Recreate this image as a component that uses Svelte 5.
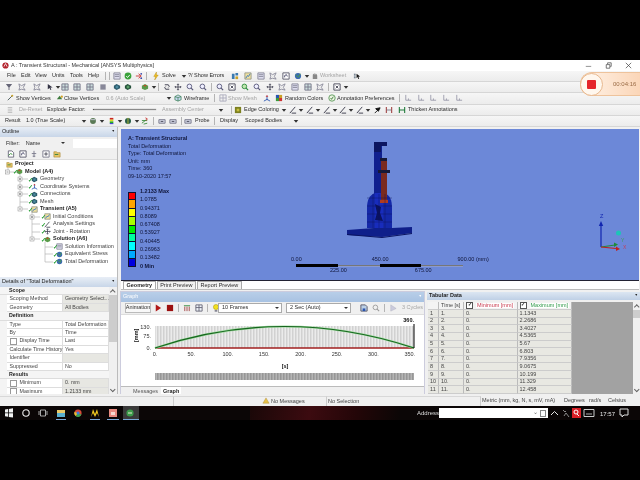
<script>
  // toolbar items are [x, kind, text]; width comes from the next item's x
  const ic = {
    arrow: '<path d="M2 3.5h5L4.5 6.5z" fill="#333"/>',
    page: '<path d="M1.5 1h4l2 2v5h-6z" fill="#fff" stroke="#667"/><path d="M2 6l2-2 2 1" stroke="#2a8a2a" fill="none"/>',
    check: '<circle cx="4.5" cy="4.5" r="3.8" fill="#3aa23a"/><path d="M2.5 4.5l1.5 1.7 2.6-3" stroke="#fff" fill="none"/>',
    flow: '<path d="M1 4.5h5M4 2l3 2.5L4 7" stroke="#c33" fill="none"/><circle cx="7" cy="2" r="1" fill="#34a"/><circle cx="7" cy="7" r="1" fill="#34a"/>',
    bolt: '<path d="M5 0L2 5h2L3 9l4-5.5H5z" fill="#f0c020" stroke="#a87a00" stroke-width=".4"/>',
    pin: '<path d="M1 2h3v6H1zM5 1h3v3H5z" fill="#3a7ab0"/><path d="M5 5h3v3H5z" fill="#c9a227"/>',
    chart: '<path d="M1 1h7v7H1z" fill="#eee0a0" stroke="#998"/><path d="M2 7l2-3 1 1 2-3" stroke="#2a70c0" fill="none"/>',
    doc: '<path d="M1 1h7v7H1z" fill="#dde" stroke="#889"/><path d="M2 3h5M2 5h5" stroke="#889"/>',
    tree: '<path d="M4.5 1v7M2 4h5M3 7h3" stroke="#778"/>',
    box: '<path d="M1 1h7v7H1z" fill="#fff" stroke="#556"/><path d="M3 6V4l2-1 1 2" stroke="#446" fill="none"/>',
    globe: '<circle cx="4.5" cy="4.5" r="3.5" fill="#3c6ab0"/><path d="M2 3l3 3 2-4" stroke="#4aa040" fill="none"/>',
    hand: '<path d="M2 8V3l1-1 1 1V1l1 1v1l1-1 1 2v4z" fill="#888"/>',
    funnel: '<path d="M1 1h7L5 5v3H4V5z" fill="#667"/>',
    star: '<path d="M1 1l3 2 4-2-2 4 2 3-4-1-3 1 1-3z" fill="none" stroke="#889"/>',
    cursor: '<path d="M1 2h2v1H1zM1 4h2v1H1zM1 6h2v1H1z" fill="#567"/><path d="M4 2l4 3-2 .3 1 2.2-1 .4-1-2.2L4 7z" fill="#111"/>',
    mouse: '<path d="M2 1v6l2-1.500 1 2.500 1-.5-1-2.500h2.500z" fill="#334"/>',
    grid: '<path d="M1 1h7v7H1z" fill="#cdd" stroke="#778"/><path d="M4.500 1v7M1 4.500h7" stroke="#778"/>',
    solid: '<path d="M1.500 1.500h6v6h-6z" fill="#889"/>',
    tri: '<path d="M1 3l3-2 4 2v3l-4 2-3-2z" fill="#2c5a6a"/><path d="M3 3h3v3H3z" fill="#4c8aa0"/>',
    tri2: '<path d="M1 3l3-2 4 2v3l-4 2-3-2z" fill="#244f3a"/><path d="M3 3h3v3H3z" fill="#5a9f6a"/>',
    cube: '<path d="M1 3l3.500-2L8 3v3.500L4.500 8 1 6.500z" fill="#5a9a4a"/><path d="M2.500 3l2-1 2 1-2 1z" fill="#c8452a"/>',
    rotate: '<path d="M2 2h4l1 2-1 1M7 7H3L2 5l1-1" stroke="#334" fill="none"/>',
    pan: '<path d="M4.500 1v7M1 4.500h7" stroke="#445"/><path d="M3.500 2l1-1 1 1M3.500 7l1 1 1-1M2 3.500l-1 1 1 1M7 3.500l1 1-1 1" stroke="#445" fill="none"/>',
    zoom: '<circle cx="3.800" cy="3.800" r="2.600" fill="#eef" stroke="#557"/><path d="M5.800 5.800L8 8" stroke="#557" stroke-width="1.300"/>',
    zoomg: '<circle cx="3.800" cy="3.800" r="2.600" fill="#bfe6b0" stroke="#2a8a3a"/><path d="M5.800 5.800L8 8" stroke="#2a8a3a" stroke-width="1.300"/>',
    frame: '<path d="M1 1h7v7H1z" fill="#fff" stroke="#445"/><path d="M3 3l3 3M6 3l-3 3" stroke="#445"/>',
    vert: '<path d="M2 7L7 2" stroke="#455"/><circle cx="7" cy="2" r="1.200" fill="#c9a227"/>',
    close: '<path d="M1 6l3-4 3 4z" fill="#3c7a3c"/><circle cx="6.500" cy="3" r="1.300" fill="#d4a020"/>',
    wire: '<path d="M1 3l3.500-2L8 3v3.500L4.500 8 1 6.500zM4.500 4v4M1 3l3.500 1L8 3" fill="#c7d6ee" stroke="#1f6f3f" stroke-width=".7"/>',
    mesh: '<path d="M1 1h7v7H1zM4.500 1v7M1 4.500h7" fill="none" stroke="#aab"/>',
    vec: '<path d="M4.500 7V2M4.500 6L1 8M4.500 6L8 8" stroke="#2a55b0"/><path d="M4.500 1L3 3h3z" fill="#c33"/>',
    rand: '<path d="M1 1h3.500v3.500H1z" fill="#2a55b0"/><path d="M4.500 1H8v3.500H4.500z" fill="#c9a227"/><path d="M1 4.500h3.500V8H1z" fill="#3a9a3a"/><path d="M4.500 4.500H8V8H4.500z" fill="#c33"/>',
    ann: '<circle cx="4.500" cy="4.500" r="3.600" fill="#eaf3e0" stroke="#5a9a5a"/><path d="M3 4.500l1 1.500 2-3" stroke="#3a7a3a" fill="none"/>',
    lab: '<path d="M2 1v6h6" stroke="#99a" fill="none"/><path d="M5 5v2" stroke="#99a"/>',
    grip: '<path d="M2 2h5M2 4.500h5M2 7h5" stroke="#aaa"/>',
    edge: '<path d="M1 1h7v7H1z" fill="#7c8020"/><path d="M3 3h3v3H3z" fill="#c8c040"/>',
    pen: '<path d="M1 8L7 1M3 8h5" stroke="#334"/>',
    pins: '<path d="M2 8l3-3M3 3l3 3 2-4z" fill="#111" stroke="#111"/>',
    thickr: '<path d="M1.500 1v7M7.500 1v7" stroke="#a04040" stroke-width="1.200"/><path d="M2 4.500h5" stroke="#778"/>',
    thickg: '<path d="M1.500 1v7M7.500 1v7M2 4.500h5" stroke="#1f7a3a" stroke-width="1.200"/>',
    contour: '<circle cx="4.500" cy="4.500" r="3.300" fill="#5a7a55"/><path d="M2 3h5" stroke="#ccd"/>',
    bars: '<path d="M2 1h4v2H2z" fill="#c22"/><path d="M2 3h4v2H2z" fill="#dd2"/><path d="M2 5h4v2H2z" fill="#2a2"/><path d="M2 7h4v1H2z" fill="#22c"/>',
    globe2: '<circle cx="4.500" cy="4.500" r="3.400" fill="#2a5f4a"/><path d="M4.500 1v7" stroke="#bb3"/>',
    vecs: '<path d="M1 7l5-4M1 4h6M3 8l4-1" stroke="#3a8a3a"/><path d="M5 1l2 1-1 2" stroke="#c33" fill="none"/>',
    probe: '<path d="M1 3h7v4H1z" fill="#d4d8e6" stroke="#778"/><path d="M3 5h3" stroke="#445"/>',
    folder: '<path d="M1 2h3l1 1h3v5H1z" fill="#e6c668" stroke="#a07a20" stroke-width=".6"/><path d="M2 5h4" stroke="#2a7a3a"/>',
    plus: '<path d="M1 1h7v7H1z" fill="#fff" stroke="#778"/><path d="M4.500 2.500v4M2.500 4.500h4" stroke="#445"/>',
    play: '<path d="M2 0.500l6 4-6 4z" fill="#b01818"/>',
    stop: '<path d="M1 1h7v7H1z" fill="#9c1010"/>',
    colg: '<path d="M1 1.500h7v1H1z" fill="#2a8a3a"/><path d="M2 3v5M4.500 3v5M7 3v5" stroke="#a04040"/>',
    colb: '<path d="M1 1h7v7H1z" fill="#ecf0f6" stroke="#667"/><path d="M4.500 1v7M1 4h7" stroke="#667"/>',
    bulb: '<circle cx="4.500" cy="3.400" r="2.900" fill="#f2e020" stroke="#a08a00" stroke-width=".5"/><path d="M3 7h3v1.500H3z" fill="#667"/>',
    save: '<path d="M1 1h5l2 2v5H1z" fill="#bcd0e6" stroke="#556"/><path d="M3 5h3v3H3z" fill="#2a55b0"/>',
    zoomf: '<circle cx="3.800" cy="3.800" r="2.600" fill="#f0f0f0" stroke="#999"/><path d="M5.800 5.800L8 8" stroke="#999" stroke-width="1.200"/>',
    playg: '<path d="M2 1l6 4-6 3z" fill="#ccd" stroke="#aab" stroke-width=".5"/>'
  }

  const row1 = [[7,'t','File'],[21,'t','Edit'],[35,'t','View'],[52,'t','Units'],[70,'t','Tools'],[88,'t','Help'],[105,'s'],[109,'s'],[113,'doc'],[124,'check'],[135,'flow'],[146,'s'],[152,'bolt'],[162,'t','Solve'],[180,'arrow'],[188,'t','?/ Show Errors'],[231,'pin'],[244,'chart'],[257,'doc'],[269,'star'],[282,'box'],[294,'globe'],[303,'arrow'],[311,'hand'],[320,'g','Worksheet'],[353,'cursor']]
  const row2 = [[5,'funnel'],[18,'star'],[33,'star'],[46,'mouse'],[54,'arrow'],[61,'grid'],[73,'grid'],[86,'grid'],[99,'solid'],[113,'tri'],[124,'tri2'],[141,'cube'],[150,'arrow'],[158,'s'],[163,'rotate'],[174,'pan'],[186,'zoom'],[199,'zoom'],[211,'s'],[216,'zoom'],[228,'frame'],[241,'zoomg'],[253,'zoom'],[266,'pan'],[278,'star'],[291,'doc'],[304,'grid'],[316,'star'],[328,'s'],[333,'frame'],[342,'arrow']]
  const row3 = [[6,'vert'],[16,'t','Show Vertices'],[56,'close'],[64,'t','Close Vertices'],[106,'g','0.6 (Auto Scale)'],[165,'arrow'],[174,'wire'],[184,'t','Wireframe'],[214,'s'],[219,'mesh'],[228,'g','Show Mesh'],[263,'vec'],[275,'rand'],[285,'t','Random Colors'],[328,'ann'],[337,'t','Annotation Preferences'],[399,'s'],[404,'lab'],[417,'lab'],[429,'lab'],[442,'lab'],[455,'lab']]
  const row4 = [[6,'grip'],[19,'g','De-Reset'],[47,'t','Explode Factor:'],[93,'slider'],[162,'g','Assembly Center'],[217,'arrow'],[231,'s'],[234,'edge'],[244,'t','Edge Coloring'],[280,'arrow'],[289,'pen'],[297,'arrow'],[306,'pen'],[314,'arrow'],[323,'pen'],[331,'arrow'],[339,'pen'],[347,'arrow'],[356,'pen'],[364,'arrow'],[373,'pins'],[385,'thickr'],[398,'thickg'],[408,'t','Thicken Annotations']]
  const row5 = [[5,'t','Result'],[26,'t','1.0 (True Scale)'],[80,'arrow'],[89,'contour'],[98,'arrow'],[108,'bars'],[116,'arrow'],[124,'globe2'],[133,'arrow'],[141,'vecs'],[153,'s'],[158,'probe'],[169,'probe'],[181,'s'],[184,'probe'],[195,'t','Probe'],[214,'s'],[220,'t','Display'],[245,'t','Scoped Bodies'],[292,'arrow']]

  const spaced = (items) => items.map((it, i) => ({
    kind: it[1], text: it[2],
    w: (i + 1 < items.length ? items[i + 1][0] : it[0] + 60) - it[0],
    left: i == 0 ? it[0] : 0
  }))

  const tree = [
    { d: 15, label: 'Project', bold: true, icon: 'folder' },
    { d: 25, label: 'Model (A4)', bold: true, icon: 'cube', ok: true },
    { d: 40, label: 'Geometry', icon: 'tri', ok: true },
    { d: 40, label: 'Coordinate Systems', icon: 'vec', ok: true },
    { d: 40, label: 'Connections', icon: 'tri', ok: true },
    { d: 40, label: 'Mesh', icon: 'tri', ok: true },
    { d: 40, label: 'Transient (A5)', bold: true, icon: 'chart', ok: true },
    { d: 53, label: 'Initial Conditions', icon: 'chart', ok: true },
    { d: 53, label: 'Analysis Settings', icon: 'pen', ok: true },
    { d: 53, label: 'Joint - Rotation', icon: 'pan', ok: true },
    { d: 53, label: 'Solution (A6)', bold: true, icon: 'cube', ok: true },
    { d: 65, label: 'Solution Information', icon: 'doc', ok: true },
    { d: 65, label: 'Equivalent Stress', icon: 'globe', ok: true },
    { d: 65, label: 'Total Deformation', icon: 'globe', ok: true }
  ]
  // expander boxes of the tree: [x, y, plus]
  const expanders = [[7.5, 12], [20, 19, 1], [20, 27, 1], [20, 34, 1], [20, 49], [32, 57, 1], [32, 79]]

  const details = [
    { head: 'Scope' },
    { k: 'Scoping Method', v: 'Geometry Select...', grey: true },
    { k: 'Geometry', v: 'All Bodies', grey: true },
    { head: 'Definition' },
    { k: 'Type', v: 'Total Deformation' },
    { k: 'By', v: 'Time' },
    { k: 'Display Time', v: 'Last', box: true },
    { k: 'Calculate Time History', v: 'Yes' },
    { k: 'Identifier', v: '', grey: true },
    { k: 'Suppressed', v: 'No' },
    { head: 'Results' },
    { k: 'Minimum', v: '0. mm', box: true, grey: true },
    { k: 'Maximum', v: '1.2133 mm', box: true, grey: true }
  ]

  const legendColors = ['#ff0000', '#ffa500', '#ffff00', '#a8ff00', '#00ee00', '#00ffa0', '#00ffff', '#00aaff', '#0000e0']
  const legendLabels = ['1.0785', '0.94371', '0.8089', '0.67408', '0.53927', '0.40445', '0.26963', '0.13482']

  const maxima = ['1.1343', '2.2686', '3.4027', '4.5365', '5.67', '6.803', '7.9356', '9.0675', '10.199', '11.329', '12.458']
  const xTicks = [0, 50, 100, 150, 200, 250, 300, 350].map((v) => ({ v, x: 34 + v * 0.728 }))
</script>

{#snippet icon(name)}
  <svg class="ic" viewBox="0 0 9 9">{@html ic[name]}</svg>
{/snippet}

{#snippet bar(items)}
  <div class="bar">
    {#each spaced(items) as it}
      <span class="item" style="width:{it.w}px;margin-left:{it.left}px">
        {#if it.kind == 't'}{it.text}
        {:else if it.kind == 'g'}<span class="off">{it.text}</span>
        {:else if it.kind == 's'}<i class="sep"></i>
        {:else if it.kind == 'slider'}<i class="slider"></i>
        {:else}{@render icon(it.kind)}{/if}
      </span>
    {/each}
  </div>
{/snippet}

<div class="screen">
  <div class="band"></div>
  <div class="window">
    <div class="title">
      <svg class="logo" viewBox="0 0 9 9"><circle cx="4.500" cy="4.500" r="4" fill="#b3222c"/><path d="M2.500 6l2-4 2 4" stroke="#fff" fill="none"/></svg>
      <span>A : Transient Structural - Mechanical [ANSYS Multiphysics]</span>
      <div class="controls">
        <svg viewBox="0 0 10 10"><path d="M2 6h6" stroke="#888"/></svg>
        <svg viewBox="0 0 10 10"><path d="M2.500 4h4v4h-4zM4 3.500V2h4v4H7" stroke="#444" fill="none" stroke-width=".8"/></svg>
        <svg viewBox="0 0 10 10"><path d="M2 2l6 6M8 2l-6 6" stroke="#444" stroke-width=".8"/></svg>
      </div>
    </div>
    {@render bar(row1)}
    {@render bar(row2)}
    {@render bar(row3)}
    {@render bar(row4)}
    {@render bar(row5)}

    <div class="recorder">
      <div class="rec-btn"><i></i></div>
      <span>00:04:16</span>
    </div>

    <div class="work">
      <div class="left">
        <section class="outline">
          <header class="phead">Outline<span>&#9660;</span></header>
          <div class="filter">
            <span>Filter:</span>
            <span class="combo">Name<i></i></span>
            <div class="filter-in"></div>
          </div>
          <div class="tree-tools">
            {@render icon('page')}{@render icon('box')}{@render icon('tree')}{@render icon('plus')}{@render icon('folder')}
          </div>
          <div class="tree">
            <svg class="links" viewBox="0 0 117 110">
              <path d="M8 8v4M7.500 12h10M20 14v35M20 19h8M20 27h8M20 34h8M20 42h8M20 49h8M32 52v27M32 57h8M32 64h8M32 72h8M32 79h8M45 82v20M45 87h8M45 94h8M45 102h8" stroke="#aaa" stroke-width=".6" fill="none"/>
              {#each expanders as e}
                <rect x={e[0] - 2} y={e[1] - 2} width="4" height="4" fill="#fff" stroke="#888" stroke-width=".5"/>
                <path d="M{e[0] - 1} {e[1]}h2{e[2] ? `M${e[0]} ${e[1] - 1}v2` : ''}" stroke="#333" stroke-width=".5"/>
              {/each}
            </svg>
            {#each tree as n}
              <div class="node" class:bold={n.bold} style="padding-left:{n.d - 10}px">
                <span class="nicon">{@render icon(n.icon)}{#if n.ok}<em>&#10003;</em>{/if}</span>{n.label}
              </div>
            {/each}
          </div>
        </section>

        <section class="details">
          <header class="phead">Details of "Total Deformation"<span>&#9660;</span></header>
          <div class="dbody">
            <div class="dtable">
              {#each details as d}
                {#if d.head}
                  <div class="dhead"><b>{d.head}</b></div>
                {:else}
                  <div class="drow">
                    <span class="dk">{#if d.box}<i class="cb"></i>{/if}{d.k}</span>
                    <span class="dv" class:grey={d.grey}>{d.v}</span>
                  </div>
                {/if}
              {/each}
            </div>
            <div class="scroll"><i class="up"></i><i class="thumb"></i><i class="down"></i></div>
          </div>
        </section>
      </div>

      <div class="right">
        <div class="viewport">
          <div class="caption">
            <b>A: Transient Structural</b>
            <span>Total Deformation</span>
            <span>Type: Total Deformation</span>
            <span>Unit: mm</span>
            <span>Time: 360</span>
            <span>09-10-2020 17:57</span>
          </div>
          <div class="legend">
            <div class="swatches">
              {#each legendColors as c}<i style="background:{c}"></i>{/each}
            </div>
            <div class="lvals">
              <b>1.2133 Max</b>
              {#each legendLabels as l}<span>{l}</span>{/each}
              <b>0 Min</b>
            </div>
          </div>

          <svg class="model" viewBox="0 0 66 96">
            <path d="M27 0h13v4h-5v48h-8z" fill="#10208e"/>
            <path d="M27 0h13v4h-6v6h-7z" fill="#0c1660"/>
            <path d="M20 86V66c0-9 3-13 8-15h9c6 2 8 7 8 15v20z" fill="#1428a8"/>
            <path d="M28 51h8v35h-8z" fill="#1a2ec4" opacity=".7"/>
            <path d="M34 18h6v42h-6z" fill="#7a2a20"/>
            <path d="M33 16h7v3h-7zM31 28h12v3H31z" fill="#171a38"/>
            <path d="M33 58h8v3h-8z" fill="#b03c20"/>
            <path d="M28 62l6 3-1 6 3 8-8-1 2-7z" fill="#0a1260"/>
            <path d="M0 88l27-2h18l20-1v6l-30 4L0 93z" fill="#0f1f8a"/>
            <path d="M0 92l35 3 30-4v1L35 96 0 93z" fill="#0a1460"/>
            <path d="M20 56h25M20 64h25M20 72h25M20 80h25M26 52v34M32 52v34M38 52v34" stroke="#0a1258" stroke-width=".4"/>
          </svg>

          <div class="scale">
            <div class="scale-top"><span>0.00</span><span>450.00</span><span>900.00 (mm)</span></div>
            <div class="scale-bar"><i></i><u></u><i></i><u></u></div>
            <div class="scale-bot"><span>225.00</span><span>675.00</span></div>
          </div>

          <svg class="triad" viewBox="0 0 36 44">
            <path d="M9 36V14" stroke="#1226b0" stroke-width="1.200"/><path d="M9 10l-2.200 5h4.400z" fill="#1226b0"/>
            <path d="M9 36l14-2" stroke="#1f8a3a" stroke-width="1.200"/><path d="M26 33.500l-4-2v4.500z" fill="#1f8a3a"/>
            <path d="M9 36l15 1.500" stroke="#c02020" stroke-width="1.200"/><path d="M28 38l-4-2.500v4.500z" fill="#c02020"/>
            <circle cx="26.500" cy="22" r="2.500" fill="#1cc4b8"/>
            <text x="8" y="7" class="tz">Z</text><text x="29" y="31" class="ty">Y</text><text x="31" y="38" class="tx">X</text>
          </svg>
        </div>

        <div class="tabs">
          <span class="tab on">Geometry</span><span class="tab">Print Preview</span><span class="tab">Report Preview</span>
        </div>

        <div class="lower">
          <section class="graph">
            <header class="ghead">Graph<span>&#9660;</span></header>
            <div class="gtools">
              <span class="gbtn">Animation</span>
              <span class="gicons">{@render icon('play')}{@render icon('stop')}<i class="sep"></i>{@render icon('colg')}{@render icon('colb')}<i class="sep"></i>{@render icon('bulb')}</span>
              <span class="combo2 frames">10 Frames<i></i></span>
              <span class="combo2 secs">2 Sec (Auto)<i></i></span>
              <span class="gicons tail">{@render icon('save')}{@render icon('zoomf')}<i class="sep"></i>{@render icon('playg')}</span>
              <span class="off">3 Cycles</span>
            </div>
            <svg class="chart" viewBox="0 0 305 71">
              <defs>
                <pattern id="st" width="1.500" height="4" patternUnits="userSpaceOnUse">
                  <rect width="1.500" height="4" fill="#f1f1f1"/><rect width=".7" height="4" fill="#c9c9c9"/>
                </pattern>
                <pattern id="st2" width="1.500" height="4" patternUnits="userSpaceOnUse">
                  <rect width="1.500" height="4" fill="#bdbdbd"/><rect width=".7" height="4" fill="#8c8c8c"/>
                </pattern>
              </defs>
              <rect x="34" y="11" width="259" height="22" fill="url(#st)"/>
              <path d="M34 33H293" stroke="#a11f1f" stroke-width="1.500"/>
              <path d="M34 33Q163.500 -10 293 33" stroke="#9fdc9f" stroke-width="2.200" fill="none"/>
              <path d="M34 33Q163.500 -10 293 33" stroke="#17651f" stroke-width="1.200" fill="none"/>
              <path d="M293 9V33" stroke="#000" stroke-width="1"/>
              <text class="bt" x="293" y="7" text-anchor="end">360.</text>
              <text x="30" y="14" text-anchor="end">130.</text>
              <text x="30" y="23" text-anchor="end">75.</text>
              <text x="30" y="35" text-anchor="end">0.</text>
              <text class="bt" transform="translate(17 27) rotate(-90)">[mm]</text>
              {#each xTicks as t}<text x={t.x} y="41" text-anchor="middle">{t.v}.</text>{/each}
              <text class="bt" x="164" y="53" text-anchor="middle">[s]</text>
              <rect x="34" y="58" width="259" height="7" fill="url(#st2)"/>
            </svg>
            <div class="gtabs"><span class="gt">Messages</span><span class="gt cur">Graph</span></div>
          </section>

          <section class="tabular">
            <header class="ghead dark">Tabular Data<span>&#9660;</span></header>
            <div class="tbody">
              <div class="tcols">
                <div class="trow thr">
                  <span class="c0"></span><span class="c1">Time [s]</span>
                  <span class="c2"><i class="cb on"></i><em class="mn">Minimum [mm]</em></span>
                  <span class="c3"><i class="cb on"></i><em class="mx">Maximum [mm]</em></span>
                </div>
                {#each maxima as m, i}
                  <div class="trow">
                    <span class="c0">{i + 1}</span><span class="c1">{i + 1}.</span><span class="c2">0.</span><span class="c3">{m}</span>
                  </div>
                {/each}
              </div>
              <div class="tgrey"></div>
              <div class="scroll tscroll"><i class="up"></i><i class="thumb"></i><i class="down"></i></div>
            </div>
          </section>
        </div>
      </div>
    </div>

    <div class="status">
      <span class="st1"></span>
      <span class="st2"><svg class="ic" viewBox="0 0 9 9"><path d="M1 7l3.500-6L8 7z" fill="#e6c04a" stroke="#a07a20" stroke-width=".4"/></svg>No Messages</span>
      <span class="st3">No Selection</span>
      <span class="st4">Metric (mm, kg, N, s, mV, mA)</span>
      <span class="st5">Degrees</span>
      <span class="st6">rad/s</span>
      <span class="st7">Celsius</span>
    </div>
  </div>

  <div class="taskbar">
    <svg class="tb-icons" viewBox="0 0 140 14">
      <rect x="123" y="0" width="16" height="14" fill="#3a3a3a"/>
      <path d="M5 3.500l3-.5v3.500H5zM8.800 2.900l4.200-.6v4.200H8.800zM5 7.300h3v3.500l-3-.5zM8.800 7.300H13v4.300l-4.200-.6z" fill="#f2f2f2"/>
      <circle cx="26" cy="7" r="3.200" fill="none" stroke="#f0f0f0" stroke-width="1.100"/>
      <path d="M40.500 4h5v6h-5zM39 5v4M47 5v4" fill="none" stroke="#d0d0d0" stroke-width=".8"/>
      <path d="M57 4h8v7h-8z" fill="#e8c868"/><path d="M57 7h8v4h-8z" fill="#5ab0d0"/>
      <circle cx="78" cy="7" r="3.600" fill="#d84a38"/><path d="M78 7l3.400 1.500A3.600 3.600 0 0 1 75.500 10z" fill="#3aa050"/><path d="M78 7l-2.500 3A3.600 3.600 0 0 1 74.400 6z" fill="#e8c030"/><circle cx="78" cy="7" r="1.500" fill="#3a7ae0"/>
      <path d="M91 11l2-8 2 5 2-5 2 8-2-4-2 4-2-4z" fill="#f0c820"/>
      <path d="M109 3h8v8h-8z" fill="#e88a80"/><path d="M111 6h4v3h-4z" fill="#f6d8d0"/>
      <circle cx="130" cy="7" r="3.600" fill="#3c9a4a"/><path d="M128 7h4" stroke="#e8f0d0"/>
      <path d="M56 13.500h10M90 13.500h10M107 13.500h12M123 13.500h16" stroke="#7aa8d8"/>
    </svg>
    <div class="tb-wall"></div>
    <span class="addr-l">Address</span>
    <span class="addr"><span>&#8964;</span><i></i></span>
    <svg class="tray" viewBox="0 0 90 14">
      <path d="M1 9l3.500-3.500L8 9" stroke="#e6e6e6" fill="none" stroke-width="1"/>
      <path d="M13 4l2 2 1-1M14 10l2-3 3 4" stroke="#888" fill="none"/>
      <path d="M22 2h9v10h-9z" fill="#d81f26"/><circle cx="26" cy="6" r="2" fill="none" stroke="#fff"/><path d="M27 8l2 2" stroke="#fff"/>
      <path d="M34 3.500h10v7H34z" fill="none" stroke="#ccc"/><path d="M36 8h6" stroke="#aaa"/>
      <path d="M70 3h8v6h-4l-2 2V9h-2z" fill="none" stroke="#ddd"/>
      <text x="50" y="9.500" class="clock">17:57</text>
    </svg>
  </div>
  <div class="band tail-band"></div>
</div>

<style>
  :global(body) { margin: 0; background: #000; }
  .screen { width: 640px; height: 480px; display: flex; flex-direction: column; overflow: hidden; font: 5.500px/1 "Liberation Sans", Arial, sans-serif; color: #2b2b2b; filter: blur(.35px); background: #000; }
  .band { height: 60px; background: #000; flex: none; }
  .tail-band { flex: 1; }
  .window { position: relative; height: 346px; background: #f0f0f0; flex: none; display: flex; flex-direction: column; }

  .title { height: 11px; background: #fff; display: flex; align-items: center; gap: 2px; padding-left: 2px; font-size: 5.500px; color: #333; }
  .logo { width: 7px; height: 7px; }
  .controls { margin-left: auto; display: flex; gap: 11px; margin-right: 7px; }
  .controls svg { width: 9px; height: 9px; }

  .bar { height: 11.200px; display: flex; align-items: center; background: linear-gradient(#f6f6f6, #ececec); border-bottom: 1px solid #d6d6d6; box-sizing: border-box; white-space: nowrap; }
  .item { flex: none; display: flex; align-items: center; height: 100%; }
  .off { color: #a4a4a4; }
  .ic { width: 8px; height: 8px; flex: none; }
  .sep { display: block; width: 1px; height: 8px; background: #b4b4b4; flex: none; }
  .slider { display: block; width: 62px; height: 1px; background: #8a8a8a; border-left: 1px solid #555; box-shadow: 0 0 0 .2px #aaa; }

  .recorder { position: absolute; left: 580px; top: 12px; width: 60px; height: 24px; box-sizing: border-box; display: flex; align-items: center; background: linear-gradient(90deg, #fff3e8, #fbd6b8); border-radius: 12px 0 0 12px; color: #9a6b45; font-size: 6px; border: 1px solid #eec39c; border-right: none; }
  .rec-btn { width: 23px; height: 23px; border-radius: 50%; background: #fff7ee; border: 1px solid #e8b88e; box-sizing: border-box; display: flex; align-items: center; justify-content: center; margin-right: 10px; margin-left: -1px; flex: none; }
  .rec-btn i { display: block; width: 9px; height: 9px; background: #e5252a; border-radius: 1px; }

  .work { display: grid; grid-template-columns: 118px 1fr; height: 267px; flex: none; overflow: hidden; }
  .left { display: flex; flex-direction: column; border-right: 1px solid #bbb; box-sizing: border-box; }
  .phead { height: 10px; flex: none; background: linear-gradient(#e8eef6, #c8d6e8); display: flex; align-items: center; justify-content: space-between; padding: 0 2px; font-size: 5.500px; color: #222; }
  .phead span { font-size: 3.500px; }
  .outline { height: 150px; flex: none; display: flex; flex-direction: column; }
  .filter { height: 13px; display: flex; align-items: center; padding-left: 6px; flex: none; gap: 6px; }
  .combo { width: 41px; flex: none; display: flex; align-items: center; justify-content: space-between; padding-right: 2px; box-sizing: border-box; }
  .combo i { border: 2px solid transparent; border-top: 2.500px solid #333; border-bottom: none; }
  .filter-in { flex: 1; background: #fff; height: 9px; }
  .tree-tools { height: 10px; flex: none; display: flex; align-items: center; gap: 3.500px; padding-left: 7px; border-bottom: 1px solid #ddd; box-sizing: border-box; }
  .tree { position: relative; flex: 1; background: #fff; padding-top: .500px; overflow: hidden; }
  .links { position: absolute; left: 0; top: 0; width: 117px; height: 110px; }
  .node { position: relative; height: 7.500px; display: flex; align-items: center; color: #444; white-space: nowrap; }
  .node.bold { font-weight: bold; color: #222; }
  .nicon { position: relative; width: 10px; height: 7px; flex: none; }
  .nicon .ic { width: 7px; height: 7px; position: absolute; left: 1px; top: 0; }
  .nicon em { position: absolute; left: -2px; top: 2px; color: #1d9a2a; font-size: 5.500px; font-style: normal; font-weight: bold; }

  .details { flex: 1; display: flex; flex-direction: column; min-height: 0; }
  .dbody { flex: 1; display: flex; min-height: 0; background: #f4f4f4; overflow: hidden; font-size: 5.300px; }
  .dtable { flex: 1; min-width: 0; }
  .dhead { height: 8.420px; padding-left: 9px; display: flex; align-items: center; background: #f5f5f5; box-sizing: border-box; border-bottom: 1px solid #ddd; color: #222; }
  .drow { height: 8.420px; display: grid; grid-template-columns: 56px 1fr; margin-left: 7px; box-sizing: border-box; border-bottom: 1px solid #ddd; background: #fff; color: #444; }
  .dk, .dv { display: flex; align-items: center; padding-left: 3px; border-right: 1px solid #ddd; white-space: nowrap; min-width: 0; }
  .dk { padding-left: 2.500px; }
  .dv { padding-left: 2px; }
  .dv.grey { background: #e7e7e2; }
  .cb { display: block; width: 5px; height: 5px; border: .5px solid #999; background: #fff; margin-right: 3px; flex: none; }
  .cb.on { position: relative; border-color: #555; }
  .cb.on::after { content: "\2713"; position: absolute; left: .500px; top: -.5px; font-size: 5px; font-style: normal; color: #111; font-weight: bold; }
  .scroll { width: 8px; flex: none; display: flex; flex-direction: column; background: #f0f0f0; }
  .scroll .thumb { display: block; height: 47px; background: #cdcdcd; margin-top: 1px; }
  .scroll .up, .scroll .down { display: block; height: 7px; position: relative; }
  .scroll .down { margin-top: auto; height: 11px; }
  .scroll .up::after, .scroll .down::after { content: ""; position: absolute; left: 2px; top: 3px; width: 2.500px; height: 2.500px; border-left: 1px solid #666; border-top: 1px solid #666; transform: rotate(45deg); }
  .scroll .down::after { transform: rotate(225deg); top: 2px; }

  .right { display: flex; flex-direction: column; padding: 2px 1px 0 3px; min-width: 0; background: #f0f0f0; }
  .viewport { position: relative; height: 151px; flex: none; background: #6c88d8; border-bottom: 1px solid #223; color: #10163a; }
  .caption { position: absolute; left: 7px; top: 7.500px; display: flex; flex-direction: column; gap: 1.950px; }
  .legend { position: absolute; left: 7px; top: 60px; display: flex; gap: 4px; }
  .swatches { width: 8px; display: flex; flex-direction: column; margin-top: 3px; }
  .swatches i { display: block; height: 8.400px; border: .5px solid #101030; border-width: 0 .5px .5px; box-sizing: border-box; }
  .swatches i:first-child { border-top-width: .5px; }
  .lvals { display: flex; flex-direction: column; gap: 2.800px; }
  .model { position: absolute; left: 226px; top: 13px; width: 66px; height: 96px; }
  .scale { position: absolute; left: 170px; top: 128px; width: 210px; font-size: 5.500px; white-space: nowrap; }
  .scale-top { display: flex; height: 7px; }
  .scale-top span:nth-child(1) { margin-right: 70px; }
  .scale-top span:nth-child(2) { margin-right: 69px; }
  .scale-bar { display: flex; height: 3px; margin-left: 5px; width: 167px; }
  .scale-bar i { display: block; flex: 1; background: #000; }
  .scale-bar u { display: block; flex: 1; height: 1px; margin-top: 1px; background: #777; border-bottom: 1px solid #8a9ad0; }
  .scale-bot { display: flex; margin-top: 1.500px; padding-left: 39px; }
  .scale-bot span:first-child { margin-right: 68px; }
  .triad { position: absolute; left: 471px; top: 82px; width: 36px; height: 44px; }
  .tz { fill: #1226b0; font-size: 5.500px; }
  .ty { fill: #3a9a5a; font-size: 5px; }
  .tx { fill: #c04060; font-size: 5px; }

  .tabs { height: 9px; flex: none; background: #fff; display: flex; align-items: flex-end; padding-left: 2px; gap: 1px; font-size: 5.500px; border-bottom: 1px solid #bbb; box-sizing: border-box; }
  .tab { height: 8px; padding: 1.500px 2.500px 0; box-sizing: border-box; border: .5px solid #aaa; border-bottom: none; background: #f2f2f2; }
  .tab.on { font-weight: bold; background: #fff; }

  .lower { flex: 1; display: grid; grid-template-columns: 305px 213px; column-gap: 2px; padding-top: 1px; min-height: 0; margin-left: -1px; }
  .graph, .tabular { display: flex; flex-direction: column; min-height: 0; overflow: hidden; }
  .graph { background: #fff; border: .5px solid #ccd; box-sizing: border-box; }
  .ghead { height: 10px; flex: none; background: linear-gradient(#b8cee8, #a8c2e2); color: #fff; display: flex; align-items: center; justify-content: space-between; padding: 0 2px; }
  .ghead span { font-size: 3.500px; }
  .ghead.dark { color: #222; font-weight: bold; background: linear-gradient(#dce6f2, #bfd0e6); margin-top: 1px; height: 8px; }
  .gtools { height: 13px; flex: none; display: flex; align-items: center; background: #f0f0f0; padding-left: 4px; white-space: nowrap; border-bottom: 1px solid #ddd; box-sizing: border-box; }
  .gbtn { width: 26px; height: 10px; display: flex; align-items: center; justify-content: center; border: .5px solid #bbb; box-sizing: border-box; background: #f8f8f8; margin-right: 3px; }
  .gicons { display: flex; align-items: center; gap: 4px; width: 64px; flex: none; }
  .gicons.tail { width: 37px; margin-left: 5px; }
  .combo2 { position: relative; height: 10px; box-sizing: border-box; background: #fff; border: .5px solid #aaa; display: flex; align-items: center; padding-left: 3px; flex: none; margin-right: 4px; }
  .combo2.frames { width: 64px; }
  .combo2.secs { width: 65px; }
  .combo2 i { position: absolute; right: 2px; top: 3.500px; border: 2px solid transparent; border-top: 2.500px solid #333; border-bottom: none; }
  .gtools > .off { margin-left: 5px; }
  .chart { width: 305px; height: 71px; flex: none; display: block; background: #fff; }
  .chart text { font: 5.500px "Liberation Sans", sans-serif; fill: #333; }
  .chart .bt { font-weight: bold; fill: #111; }
  .gtabs { flex: 1; background: #f0f0f0; display: flex; align-items: center; padding-left: 4px; gap: 1px; border-top: 1px solid #bbb; }
  .gt { color: #555; padding: 0 2px 0 8px; }
  .gt.cur { font-weight: bold; color: #222; background: #fff; padding: 2px; }

  .tabular { background: #f0f0f0; }
  .tbody { flex: 1; display: flex; min-height: 0; margin-top: 2px; padding-left: 1px; overflow: hidden; }
  .tcols { width: 144px; flex: none; }
  .trow { height: 7.650px; display: grid; grid-template-columns: 11px 25px 53.500px 54px; background: #e8e8e2; color: #444; }
  .trow span { display: flex; align-items: center; padding-left: 2px; border-right: .5px solid #bbb; border-bottom: .5px solid #ccc; white-space: nowrap; overflow: hidden; }
  .trow.thr { height: 8px; background: #f3f3f3; }
  .trow em { font-style: normal; background: #fff; padding: 0 1px; }
  .mn { color: #c8384c; }
  .mx { color: #2f9a4a; }
  .tgrey { flex: 1; background: #a2a2a2; }
  .tscroll { width: 7px; }
  .tscroll .thumb { height: 8px; }

  .status { height: 12px; flex: none; position: relative; display: grid; grid-template-columns: 174px 153px 154px 82px 25px 19px 33px; align-items: center; background: #f0f0f0; padding-top: 2px; box-sizing: border-box; color: #444; }
  .status span { height: 100%; display: flex; align-items: center; padding-left: 1px; white-space: nowrap; box-sizing: border-box; }
  .st1 { border-right: 1px solid #ccc; border-top: 1px solid #d8d8d8; }
  .st2 { padding-left: 88px !important; gap: 1px; border-right: 1px solid #ccc; border-top: 1px solid #d8d8d8; }
  .st3 { border-right: 1px solid #ccc; border-top: 1px solid #d8d8d8; }

  .taskbar { position: relative; height: 14px; flex: none; background: #0b0606; display: flex; align-items: center; overflow: hidden; }
  .tb-icons { width: 140px; height: 14px; flex: none; }
  .tb-wall { position: absolute; left: 250px; top: 0; width: 150px; height: 14px; background: linear-gradient(100deg, #1a0808 0, #3c0b10 40%, #240608 70%, #0b0606 100%); }
  .addr-l { position: absolute; left: 417px; color: #ddd; font-size: 6px; }
  .addr { position: absolute; left: 439px; top: 2px; width: 109px; height: 10px; background: #fff; color: #666; display: flex; align-items: center; justify-content: flex-end; gap: 2px; padding-right: 2px; box-sizing: border-box; }
  .addr i { display: block; width: 4px; height: 5px; border: .5px solid #888; }
  .tray { position: absolute; left: 550px; top: 0; width: 90px; height: 14px; }
  .clock { fill: #e8e8e8; font: 6px "Liberation Sans", sans-serif; }
</style>
